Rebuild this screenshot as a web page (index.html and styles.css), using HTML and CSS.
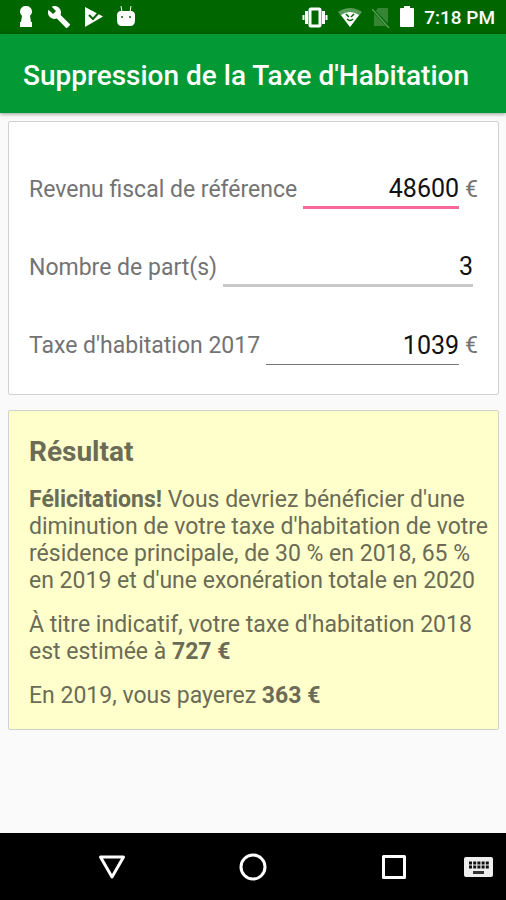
FILE: index.html
```html
<!DOCTYPE html>
<html lang="fr">
<head>
  <meta charset="UTF-8" />
  <meta name="viewport" content="width=device-width, initial-scale=1.0"/>
  <title>Suppression de la Taxe d'Habitation</title>
  <link rel="stylesheet" href="styles.css">
</head>
<body>
  <div class="status-bar">
    <div class="status-icons notifications">
      <svg width="14" height="24" viewBox="0 0 14 24" fill="#fff">
        <path d="M7 1a5.500 5.500 0 0 1 6 5.500c0 2-1 3.200-2 4.200L12 17h1v5H1v-5h1l1-6.300C2 9.700 1 8.500 1 6.500A5.500 5.500 0 0 1 7 1z"/>
      </svg>
      <svg width="24" height="24" viewBox="0 0 24 24" fill="#fff">
        <path d="M22.700 19l-9.100-9.100c.9-2.300.4-5-1.500-6.900-2-2-5-2.400-7.400-1.300L9 6 6 9 1.600 4.700C.4 7.100.9 10.100 2.900 12.100c1.900 1.900 4.600 2.400 6.900 1.500l9.100 9.100c.4.400 1 .4 1.400 0l2.300-2.300c.5-.4.5-1.100.1-1.400z"/>
      </svg>
      <svg width="18" height="24" viewBox="0 0 18 24">
        <path d="M0 2l18 9.500L0 22z" fill="#fff"/>
        <path d="M4 10l4 4 8-9" fill="none" stroke="#060" stroke-width="2"/>
      </svg>
      <svg width="18" height="24" viewBox="0 0 18 24">
        <path d="M4 1l1 6M14 1l-1 6" stroke="#fff"/>
        <path d="M3 6h12q3 1 3 4v5q0 6-5 6H5q-5 0-5-6v-5q0-3 3-4z" fill="#fff"/>
        <circle cx="5" cy="12" r="1" fill="#060"/>
        <circle cx="13" cy="12" r="1" fill="#060"/>
      </svg>
    </div>
    <div class="status-icons system">
      <svg width="26" height="24" viewBox="0 0 26 24" fill="none" stroke="#fff">
        <rect x="8" y="4" width="10" height="17" rx="1" stroke-width="3"/>
        <path d="M4.500 6v13M21.500 6v13" stroke-width="3"/>
        <path d="M1.500 10v5M24.500 10v5" stroke-width="2"/>
      </svg>
      <svg width="24" height="24" viewBox="0 0 24 24">
        <path d="M0 7Q12-1 24 7L12 22z" fill="#569b56"/>
        <path d="M3 10q9-6 18 0l-9 12z" fill="#fff"/>
        <path d="M8 9l3 3M16 9l-3 3M9 14q3 3 6 0" fill="none" stroke="#060" stroke-width="1.500"/>
      </svg>
      <svg width="18" height="24" viewBox="0 0 18 24">
        <path d="M6 3h10v18H2V8z" fill="#358535"/>
        <path d="M0 4l17 18" stroke="#060" stroke-width="3"/>
        <path d="M0 4l17 19" stroke="#569b56" stroke-width="1.500"/>
      </svg>
      <svg width="14" height="24" viewBox="0 0 14 24" fill="#fff">
        <path d="M4 1h6v2h3q1 0 1 1v17q0 1-1 1H1q-1 0-1-1V4q0-1 1-1h3z"/>
      </svg>
      <span class="clock">7:18 PM</span>
    </div>
  </div>

  <header class="app-bar">
    <h1>Suppression de la Taxe d'Habitation</h1>
  </header>

  <main class="content">
    <form class="card">
      <div class="field">
        <label for="revenu">Revenu fiscal de référence</label>
        <input type="text" inputmode="numeric" id="revenu" class="active" value="48600">
        <span class="unit">€</span>
      </div>
      <div class="field">
        <label for="parts">Nombre de part(s)</label>
        <input type="text" inputmode="numeric" id="parts" class="light" value="3">
      </div>
      <div class="field">
        <label for="taxe">Taxe d'habitation 2017</label>
        <input type="text" inputmode="numeric" id="taxe" value="1039">
        <span class="unit">€</span>
      </div>
    </form>

    <section class="card result">
      <h2>Résultat</h2>
      <p><strong>Félicitations!</strong> Vous devriez bénéficier d'une diminution de votre taxe d'habitation de votre résidence principale, de 30 % en 2018, 65 % en 2019 et d'une exonération totale en 2020</p>
      <p>À titre indicatif, votre taxe d'habitation 2018 est estimée à <strong>727 €</strong></p>
      <p>En 2019, vous payerez <strong>363 €</strong></p>
    </section>
  </main>

  <nav class="nav-bar">
    <button type="button" class="back" aria-label="Retour">
      <svg width="28" height="28" viewBox="0 0 28 28" fill="none" stroke="#fff" stroke-width="3" stroke-linejoin="round">
        <path d="M2.500 4h23L14 24z"/>
      </svg>
    </button>
    <button type="button" aria-label="Accueil">
      <svg width="28" height="28" viewBox="0 0 28 28" fill="none" stroke="#fff" stroke-width="3">
        <circle cx="14" cy="14" r="12"/>
      </svg>
    </button>
    <button type="button" aria-label="Applications">
      <svg width="28" height="28" viewBox="0 0 28 28" fill="none" stroke="#fff" stroke-width="3" stroke-linejoin="round">
        <rect x="3.500" y="3.500" width="21" height="21"/>
      </svg>
    </button>
    <button type="button" aria-label="Clavier">
      <svg width="29" height="28" viewBox="0 0 29 28">
        <rect x="0" y="4" width="29" height="20" rx="2" fill="#eee"/>
        <path d="M5 10h20M5 14h20" stroke="#111" stroke-width="3" stroke-dasharray="3 1.200"/>
        <path d="M9 19.500h11" stroke="#333" stroke-width="3"/>
      </svg>
    </button>
  </nav>
</body>
</html>
```
FILE: styles.css
```css
* {
  box-sizing: border-box;
}

body {
  font-family: Roboto, sans-serif;
  margin: 0;
  min-height: 100vh;
  display: flex;
  flex-direction: column;
  background: #fafafa;
  color: #737373;
}

svg {
  display: block;
}

.status-bar {
  display: flex;
  justify-content: space-between;
  align-items: center;
  height: 34px;
  padding: 0 11px 0 19px;
  background: #006600;
  color: #fff;
}

.status-icons {
  display: flex;
  align-items: center;
}

.notifications {
  gap: 14px;
}

.system {
  gap: 10px;
}

.clock {
  font-size: 19px;
  font-weight: 500;
}

.app-bar {
  display: flex;
  align-items: center;
  height: 79px;
  padding: 4px 23px 0;
  background: #039a35;
  box-shadow: 0 1px 4px rgba(0, 0, 0, 0.4);
}

h1 {
  margin: 0;
  font-size: 28px;
  font-weight: 500;
  color: #fff;
  white-space: nowrap;
}

.content {
  flex: 1;
  display: flex;
  flex-direction: column;
  gap: 15px;
  padding: 8px 7px 8px 8px;
}

.card {
  padding: 28px 20px;
  background: #fff;
  border: 1px solid #d0d2d2;
  border-radius: 2px;
}

.field {
  display: flex;
  align-items: center;
  gap: 6px;
  height: 60px;
  margin-bottom: 18px;
  font-size: 23px;
}

.field:last-child {
  margin-bottom: 0;
}

.field input {
  flex: 1;
  min-width: 0;
  height: 58px;
  padding: 20px 0 0;
  border: none;
  border-bottom: 1px solid #777;
  background: none;
  font-family: inherit;
  font-size: 25px;
  color: #111;
  text-align: right;
  outline: none;
}

.field input.active {
  border-bottom: 3px solid #f8699a;
}

.field input.light {
  border-bottom: 3px solid #c8c8c8;
  margin-right: 5px;
}

label,
.unit {
  padding-top: 18px;
}

.result {
  padding: 24px 8px 20px 20px;
  background: #ffffcc;
  color: #6b6b56;
}

h2 {
  margin: 0 0 17px;
  font-size: 28px;
  line-height: 34px;
  font-weight: 700;
}

p {
  margin: 0 0 17px;
  font-size: 23px;
  line-height: 27px;
}

p:last-child {
  margin-bottom: 0;
}

.nav-bar {
  display: grid;
  grid-template-columns: 42px 1fr 1fr 1fr 42px;
  align-items: center;
  height: 67px;
  background: #000;
}

.nav-bar button {
  display: flex;
  justify-content: center;
  padding: 0;
  border: none;
  background: none;
  cursor: pointer;
}

.nav-bar .back {
  grid-column: 2;
}

.nav-bar button:last-child {
  justify-content: flex-start;
}
```
